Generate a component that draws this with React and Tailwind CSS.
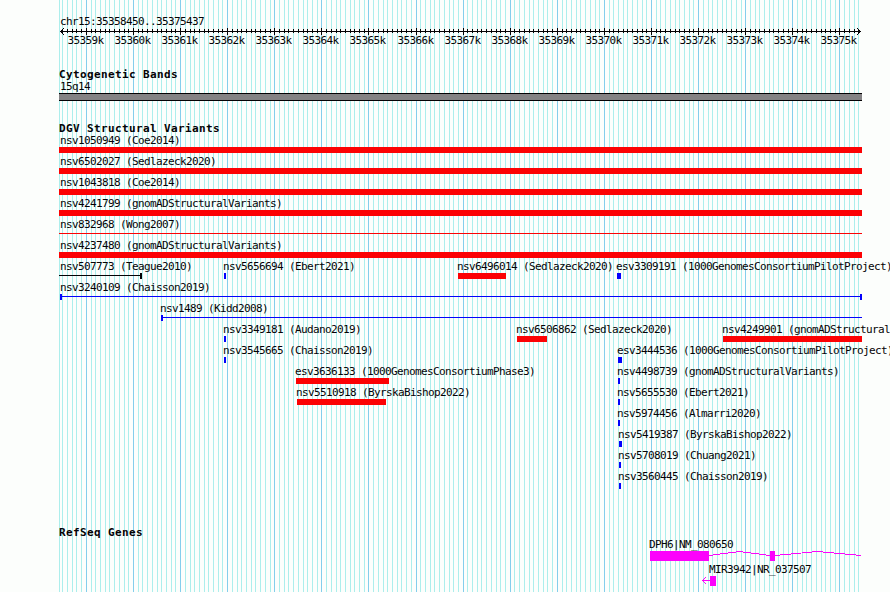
const REGION = { chrom: 'chr15', start: 35358450, end: 35375437 }
const LEFT = 60
const WIDTH = 800

const toX = pos => Math.round(LEFT + ((pos - REGION.start) * WIDTH) / (REGION.end - REGION.start))

const TICKS = []
for (let pos = 35358500; pos < REGION.end; pos += 100) {
  TICKS.push({ pos, x: toX(pos), major: pos % 1000 === 0 })
}

// x and end are pixel columns, caps are the whisker ends of thin features
const ROWS = [
  [{ label: 'nsv1050949 (Coe2014)', x: 59, end: 862, kind: 'gain' }],
  [{ label: 'nsv6502027 (Sedlazeck2020)', x: 59, end: 862, kind: 'gain' }],
  [{ label: 'nsv1043818 (Coe2014)', x: 59, end: 862, kind: 'gain' }],
  [{ label: 'nsv4241799 (gnomADStructuralVariants)', x: 59, end: 862, kind: 'gain' }],
  [{ label: 'nsv832968 (Wong2007)', x: 59, end: 862, kind: 'thinRed' }],
  [{ label: 'nsv4237480 (gnomADStructuralVariants)', x: 59, end: 862, kind: 'gain' }],
  [
    { label: 'nsv507773 (Teague2010)', x: 59, end: 142, kind: 'thinBlack', capRight: true },
    { label: 'nsv5656694 (Ebert2021)', x: 224, end: 226, kind: 'small' },
    { label: 'nsv6496014 (Sedlazeck2020)', x: 458, end: 506, kind: 'gain' },
    { label: 'esv3309191 (1000GenomesConsortiumPilotProject)', x: 617, end: 621, kind: 'small' },
  ],
  [{ label: 'nsv3240109 (Chaisson2019)', x: 60, end: 862, kind: 'thinBlue', capLeft: true, capRight: true }],
  [{ label: 'nsv1489 (Kidd2008)', x: 161, end: 862, kind: 'thinBlue', capLeft: true }],
  [
    { label: 'nsv3349181 (Audano2019)', x: 224, end: 226, kind: 'small' },
    { label: 'nsv6506862 (Sedlazeck2020)', x: 517, end: 547, kind: 'gain' },
    { label: 'nsv4249901 (gnomADStructuralVariants)', x: 723, end: 862, kind: 'gain' },
  ],
  [
    { label: 'nsv3545665 (Chaisson2019)', x: 224, end: 226, kind: 'small' },
    { label: 'esv3444536 (1000GenomesConsortiumPilotProject)', x: 618, end: 622, kind: 'small' },
  ],
  [
    { label: 'esv3636133 (1000GenomesConsortiumPhase3)', x: 296, end: 389, kind: 'gain' },
    { label: 'nsv4498739 (gnomADStructuralVariants)', x: 618, end: 620, kind: 'small' },
  ],
  [
    { label: 'nsv5510918 (ByrskaBishop2022)', x: 297, end: 386, kind: 'gain' },
    { label: 'nsv5655530 (Ebert2021)', x: 618, end: 620, kind: 'small' },
  ],
  [{ label: 'nsv5974456 (Almarri2020)', x: 618, end: 620, kind: 'small' }],
  [{ label: 'nsv5419387 (ByrskaBishop2022)', x: 619, end: 622, kind: 'small' }],
  [{ label: 'nsv5708019 (Chuang2021)', x: 619, end: 621, kind: 'small' }],
  [{ label: 'nsv3560445 (Chaisson2019)', x: 619, end: 621, kind: 'small' }],
]

const KINDS = {
  gain: { color: 'bg-[#fc0204]', thin: false },
  small: { color: 'bg-[#0402fc]', thin: false },
  thinRed: { color: 'bg-[#fc0204]', thin: true },
  thinBlack: { color: 'bg-[#040204]', thin: true },
  thinBlue: { color: 'bg-[#0402fc]', thin: true },
}

function Label({ children }) {
  return (
    <div className="h-3 text-[11px] leading-3 tracking-[-0.622px] whitespace-pre">{children}</div>
  )
}

function TrackTitle({ children }) {
  return (
    <h2 className="h-3 pl-[59px] text-[11px] leading-3 font-bold tracking-[0.378px] whitespace-pre">{children}</h2>
  )
}

function Grid() {
  return (
    <svg className="absolute inset-0" width="890" height="592" shapeRendering="crispEdges">
      <rect x="59" y="0" width="1" height="592" fill="#aceeec" />
      {TICKS.map(t => (
        <rect key={t.pos} x={t.x} y="0" width="1" height="592" fill={t.major ? '#84ceec' : '#aceeec'} />
      ))}
    </svg>
  )
}

function Ruler() {
  return (
    <div>
      <svg className="block" width="890" height="8" shapeRendering="crispEdges" fill="#040204">
        <rect x="60" y="3" width="801" height="1" />
        {TICKS.map(t => (
          <rect key={t.pos} x={t.x} y={t.major ? 0 : 1} width="1" height={t.major ? 7 : 4} />
        ))}
        <path d="M61 2h1v1h-1zM62 1h1v1h-1zM63 0h1v1h-1zM61 4h1v1h-1zM62 5h1v1h-1zM63 6h1v1h-1z" />
        <path d="M859 2h1v1h-1zM858 1h1v1h-1zM857 0h1v1h-1zM859 4h1v1h-1zM858 5h1v1h-1zM857 6h1v1h-1z" />
      </svg>
      <div className="relative h-3">
        {TICKS.filter(t => t.major).map(t => (
          <div key={t.pos} className="absolute top-[-1px]" style={{ left: t.x - 18.5 }}>
            <Label>{`${t.pos / 1000}k`}</Label>
          </div>
        ))}
      </div>
    </div>
  )
}

function Feature({ label, x, end, kind, capLeft, capRight }) {
  const { color, thin } = KINDS[kind]
  return (
    <div className="absolute top-0" style={{ left: x }}>
      <div style={{ marginLeft: x === 59 ? 1 : x === 60 ? 0 : -1 }}>
        <Label>{label}</Label>
      </div>
      <div className="flex h-1.5" style={{ width: end - x }}>
        {capLeft && <div className={`w-0.5 ${color}`} />}
        <div className={`grow ${color} ${thin ? 'mt-0.5 h-px' : 'h-1.5'}`} />
        {capRight && <div className={`w-0.5 ${color}`} />}
      </div>
    </div>
  )
}

function Genes() {
  return (
    <div>
      <div className="pl-[649px]">
        <Label>DPH6|NM_080650</Label>
      </div>
      <svg className="block" width="890" height="13" shapeRendering="crispEdges" fill="#fc02fc">
        <rect x="650" y="0" width="59" height="10" />
        <rect x="770" y="0" width="5" height="10" />
        <path d="M709 4.5L739.5 0.5L770 4.5M775 4.5L817.5 0.5L861 4.5" fill="none" stroke="#fc02fc" />
      </svg>
      <div className="pl-[709px]">
        <Label>MIR3942|NR_037507</Label>
      </div>
      <svg className="block" width="890" height="10" shapeRendering="crispEdges" fill="#fc02fc">
        <rect x="710" y="0" width="6" height="10" />
        <rect x="702" y="4" width="8" height="1" />
        <path d="M703 3h1v1h-1zM704 2h1v1h-1zM705 1h1v1h-1zM703 5h1v1h-1zM704 6h1v1h-1zM705 7h1v1h-1z" />
      </svg>
    </div>
  )
}

export default function App() {
  return (
    <div className="relative h-[592px] w-[890px] overflow-hidden bg-[#fcfefc] font-['DejaVu_Sans_Mono',monospace] text-[#040204]">
      <Grid />
      <div className="relative flex flex-col">
        <div className="pt-4 pl-[60px]">
          <Label>{`${REGION.chrom}:${REGION.start}..${REGION.end}`}</Label>
        </div>
        <Ruler />
        <section className="mt-[21px]">
          <TrackTitle>Cytogenetic Bands</TrackTitle>
          <div className="pl-[60px]">
            <Label>15q14</Label>
          </div>
          <div className="ml-[59px] h-2 w-[803px] border-y border-[#040204] bg-[#848284]" />
        </section>
        <section className="mt-[22px]">
          <TrackTitle>DGV Structural Variants</TrackTitle>
          <div>
            {ROWS.map((row, i) => (
              <div key={i} className="relative h-[21px]">
                {row.map(f => (
                  <Feature key={f.label} {...f} />
                ))}
              </div>
            ))}
          </div>
        </section>
        <section className="mt-[35px]">
          <TrackTitle>RefSeq Genes</TrackTitle>
          <Genes />
        </section>
      </div>
    </div>
  )
}
